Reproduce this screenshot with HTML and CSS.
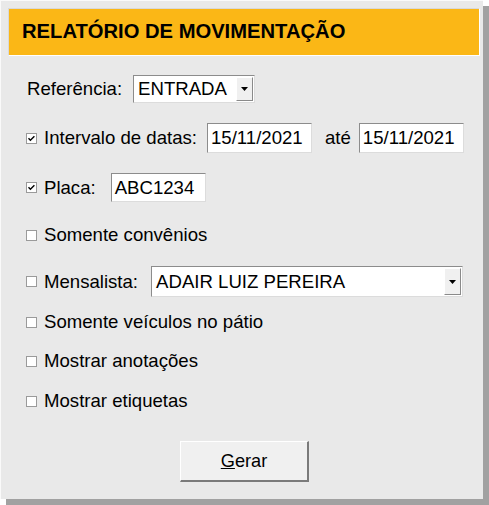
FILE: index.html
```html
<!DOCTYPE html>
<html lang="pt-BR">
<head>
<meta charset="utf-8">
<title>Relatório de Movimentação</title>
<link rel="stylesheet" href="styles.css">
</head>
<body>
<div class="panel">
  <div class="header">RELATÓRIO DE MOVIMENTAÇÃO</div>
  <div class="form">
    <div class="row r1">
      <span class="label plain">Referência:</span>
      <div class="select sel-ref">
        <span class="sel-text">ENTRADA</span>
        <span class="sel-btn"><svg width="7" height="4" viewBox="0 0 7 4"><path d="M0 0H7L3.5 4Z" fill="#000"/></svg></span>
      </div>
    </div>
    <div class="row r2">
      <span class="cb"><svg width="11" height="11" viewBox="0 0 11 11"><rect x="0.5" y="0.5" width="10" height="10" fill="#fff" stroke="#9a9a9a"/><path d="M2.5 5.2L4.4 7.2L8.4 3.2" fill="none" stroke="#000" stroke-width="1.4"/></svg></span>
      <span class="label">Intervalo de datas:</span>
      <div class="input in-date1">15/11/2021</div>
      <span class="ate">até</span>
      <div class="input in-date2">15/11/2021</div>
    </div>
    <div class="row r3">
      <span class="cb"><svg width="11" height="11" viewBox="0 0 11 11"><rect x="0.5" y="0.5" width="10" height="10" fill="#fff" stroke="#9a9a9a"/><path d="M2.5 5.2L4.4 7.2L8.4 3.2" fill="none" stroke="#000" stroke-width="1.4"/></svg></span>
      <span class="label">Placa:</span>
      <div class="input in-placa">ABC1234</div>
    </div>
    <div class="row r4">
      <span class="cb"><svg width="11" height="11" viewBox="0 0 11 11"><rect x="0.5" y="0.5" width="10" height="10" fill="#fff" stroke="#9a9a9a"/></svg></span>
      <span class="label">Somente convênios</span>
    </div>
    <div class="row r5">
      <span class="cb"><svg width="11" height="11" viewBox="0 0 11 11"><rect x="0.5" y="0.5" width="10" height="10" fill="#fff" stroke="#9a9a9a"/></svg></span>
      <span class="label">Mensalista:</span>
      <div class="select sel-mens">
        <span class="sel-text">ADAIR LUIZ PEREIRA</span>
        <span class="sel-btn"><svg width="7" height="4" viewBox="0 0 7 4"><path d="M0 0H7L3.5 4Z" fill="#000"/></svg></span>
      </div>
    </div>
    <div class="row r6">
      <span class="cb"><svg width="11" height="11" viewBox="0 0 11 11"><rect x="0.5" y="0.5" width="10" height="10" fill="#fff" stroke="#9a9a9a"/></svg></span>
      <span class="label">Somente veículos no pátio</span>
    </div>
    <div class="row r7">
      <span class="cb"><svg width="11" height="11" viewBox="0 0 11 11"><rect x="0.5" y="0.5" width="10" height="10" fill="#fff" stroke="#9a9a9a"/></svg></span>
      <span class="label">Mostrar anotações</span>
    </div>
    <div class="row r8">
      <span class="cb"><svg width="11" height="11" viewBox="0 0 11 11"><rect x="0.5" y="0.5" width="10" height="10" fill="#fff" stroke="#9a9a9a"/></svg></span>
      <span class="label">Mostrar etiquetas</span>
    </div>
    <div class="btn-row">
      <button class="btn"><span class="u">G</span>erar</button>
    </div>
  </div>
</div>
</body>
</html>
```

FILE: styles.css
```css
html, body {
  margin: 0;
  padding: 0;
  background: #ffffff;
}
body {
  width: 489px;
  height: 505px;
  overflow: hidden;
  font-family: "Liberation Sans", Arial, sans-serif;
  font-size: 18.6px;
  color: #000;
}
.panel {
  box-sizing: border-box;
  width: 483px;
  height: 499px;
  background: #e9e9e9;
  border-top: 1px solid #fafafa;
  border-left: 1px solid #fafafa;
  box-shadow: 6px 6px 0 #a1a1a1;
  padding: 7px 3px 0 7px;
}
.header {
  box-sizing: border-box;
  height: 48px;
  background: #fbb716;
  border: 1px solid #d9d9d9;
  border-right-color: #ffffff;
  border-bottom-color: #ffffff;
  display: flex;
  align-items: center;
  padding-left: 13px;
  padding-bottom: 1px;
  font-weight: bold;
  font-size: 20.2px;
}
.form {
  display: flex;
  flex-direction: column;
  padding-left: 17px;
}
.row {
  display: flex;
  align-items: center;
  height: 28px;
}
.r1 { margin-top: 19px; height: 28px; }
.r2 { margin-top: 20px; height: 30px; }
.r3 { margin-top: 20px; height: 29px; }
.r4 { margin-top: 19px; height: 28px; }
.r5 { margin-top: 17px; height: 31px; }
.r6 { margin-top: 11px; height: 28px; }
.r7 { margin-top: 11px; height: 28px; }
.r8 { margin-top: 12px; height: 28px; }
.label.plain {
  margin-left: 2px;
}
.cb {
  display: flex;
  width: 11px;
  height: 11px;
  margin-left: 1px;
  margin-right: 7px;
}
.input, .select {
  box-sizing: border-box;
  height: 100%;
  background: #fff;
  border: 1px solid #8c8c8c;
  border-right-color: #dcdcdc;
  border-bottom-color: #dcdcdc;
  display: flex;
  align-items: center;
  padding-left: 3px;
  white-space: nowrap;
}
.sel-ref { width: 122px; margin-left: 11px; }
.in-date1 { width: 105px; margin-left: 10px; }
.ate { margin-left: 13px; margin-right: 8px; }
.in-date2 { width: 105px; }
.in-placa { width: 95px; margin-left: 15px; }
.sel-mens { width: 312px; margin-left: 13px; }
.select { padding-right: 1px; }
.sel-text { flex: 1; padding-left: 1px; }
.sel-btn {
  box-sizing: border-box;
  width: 17px;
  height: calc(100% - 2px);
  background: #f0f0f0;
  border: 1px solid #ffffff;
  border-right-color: #8a8a8a;
  border-bottom-color: #8a8a8a;
  display: flex;
  align-items: center;
  justify-content: center;
}
.sel-btn svg { display: block; }
.btn-row {
  margin-top: 26px;
  padding-left: 155px;
}
.btn {
  box-sizing: border-box;
  width: 129px;
  height: 41px;
  background: #f0f0f0;
  border: 1px solid #ffffff;
  border-right: 2px solid #7a7a7a;
  border-bottom: 2px solid #7a7a7a;
  font-family: "Liberation Sans", Arial, sans-serif;
  font-size: 18.2px;
  color: #000;
  padding: 0;
}
.u { text-decoration: underline; }
```
